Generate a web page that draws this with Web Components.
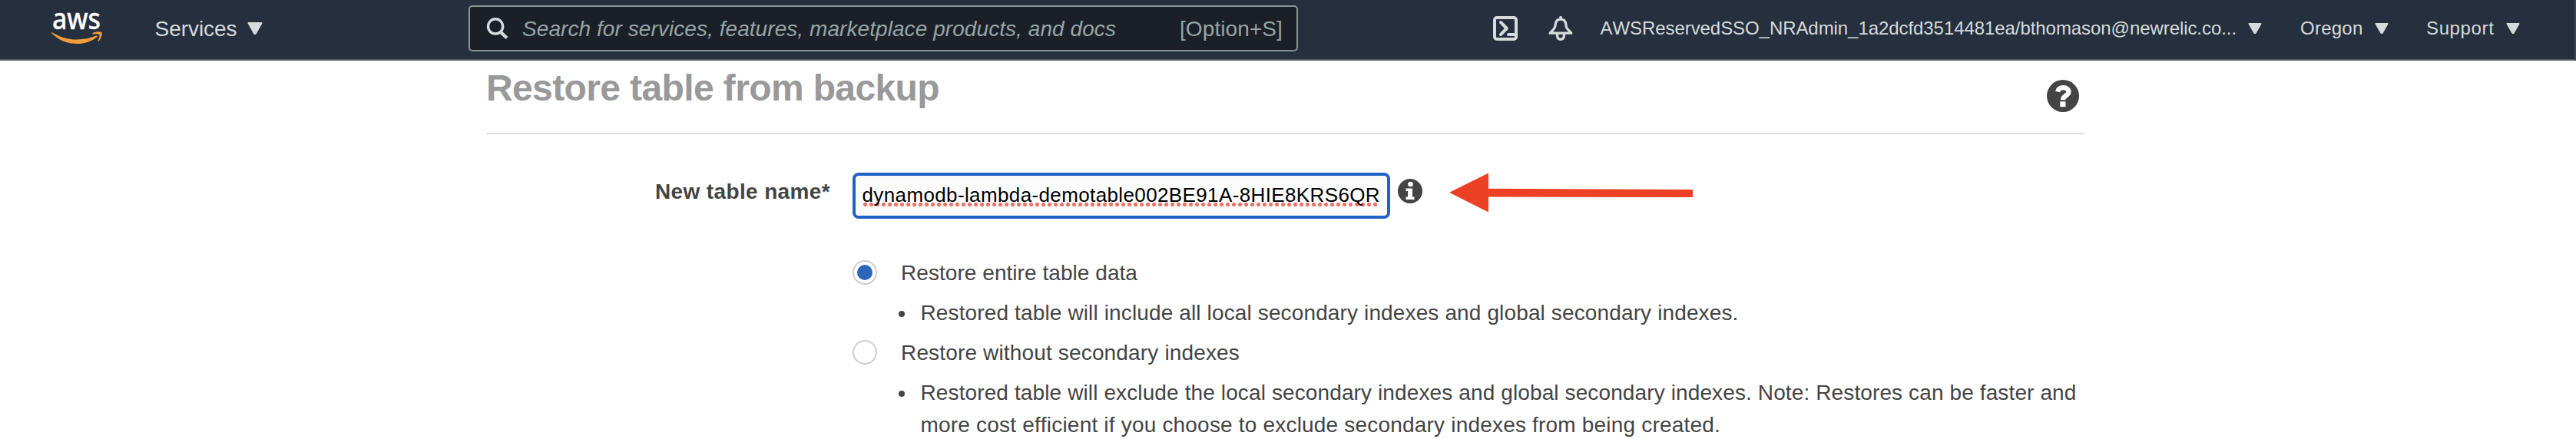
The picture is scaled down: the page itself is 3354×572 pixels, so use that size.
<!DOCTYPE html>
<html lang="en">
<head>
<meta charset="utf-8">
<title>Restore table from backup</title>
<style>
html,body{margin:0;height:572px;overflow:hidden;background:#fff}
body{font-family:"Liberation Sans",Arial,sans-serif;color:#444}
</style>
</head>
<body>
<console-app></console-app>
<script>
const define = (name, html, setup) => customElements.define(name, class extends HTMLElement {
  connectedCallback() {
    if (this.shadowRoot) return;
    const t = document.createElement('template');
    t.innerHTML = html;
    this.attachShadow({mode: 'open'}).append(t.content.cloneNode(true));
    if (setup) setup.call(this, this.shadowRoot);
  }
});

/* One line of text, tracked so that it spans the given width. */
define('text-run', `<style>
:host{display:block;white-space:pre;flex:none}
span{display:inline-block;vertical-align:top;font-kerning:none}
</style><span><slot></slot></span>`, function (root) {
  const w = parseFloat(this.getAttribute('w'));
  this.style.width = w + 'px';
  const s = root.querySelector('span');
  s.style.letterSpacing = (w - s.getBoundingClientRect().width) / this.textContent.length + 'px';
});

define('aws-logo', `<style>:host{display:block;width:68px;height:60px}svg{display:block;overflow:visible}text{font-family:"Noto Sans","Open Sans",sans-serif;font-weight:500}</style>
<svg width="68" height="60" viewBox="0 -16 68 60">
<text x="1.8" y="22.2" font-size="35.5" fill="#fff" stroke="#fff" stroke-width=".3" textLength="59" lengthAdjust="spacingAndGlyphs" transform="translate(0 -1.600) scale(1.07)">aws</text>
<g fill="#f09d3c"><path d="M1.2 27.2C.6 26.8 1.3 25.900 2.200 26.400C12 32.200 22.500 35.500 34.500 35.500C43 35.500 51.500 33.800 59.300 30.600C60.500 30.100 61.600 31.300 60.400 32.200C53.500 37.600 44 41 34.500 41C21.500 41 9.500 36 1.200 27.200Z"/>
<path d="M54.500 27.200C57.800 24.900 64.500 24.700 66.200 26.100C67.900 28 65.500 34.700 62.600 37.700C61.900 38.300 61.300 38 61.600 37.200C62.500 35.200 64.300 30.300 63.300 29.100C62.200 28 57.400 28.400 55 28.600C54 28.700 53.700 27.900 54.500 27.200Z"/></g></svg>`);

define('caret-down', `<style>:host{display:block;flex:none}svg{display:block;width:100%;height:100%}</style>
<svg viewBox="0 0 20 16" preserveAspectRatio="none"><path d="M1.500 1H18.500L11 14.600Q10 15.700 9 14.600Z" fill="#d5dbdb" stroke="#d5dbdb" stroke-width="2" stroke-linejoin="round"/></svg>`);

define('search-box', `<style>
:host{display:flex;box-sizing:border-box;width:1080px;height:60px;margin-top:7px;border:2px solid #879596;border-radius:5px;background:#1a1f28;color:#95a5a6;font-size:28px;line-height:57px}
svg{margin:14px 0 0 21px;flex:none}
.ph{font-style:italic;margin-left:17px}.key{margin-left:83px}
</style>
<svg width="30" height="30" viewBox="0 0 30 30" fill="none" stroke="#d5dbdb"><circle cx="12.100" cy="11.400" r="9.600" stroke-width="3.400"/><path d="M18.500 18.500L27 26.500" stroke-width="4.200"/></svg>
<text-run class="ph" w="773">Search for services, features, marketplace products, and docs</text-run>
<text-run class="key" w="134">[Option+S]</text-run>`);

define('shell-icon', `<style>:host{display:block;width:32px;height:32px}svg{display:block}</style>
<svg width="32" height="32" viewBox="0 0 32 32" fill="none" stroke="#d5dbdb" stroke-width="4"><rect x="2" y="2" width="28" height="28" rx="3"/><path d="M10 8L17.800 16L10 24" stroke-linecap="round" stroke-linejoin="round"/><path d="M20 24H29" stroke-linecap="round"/></svg>`);

define('bell-icon', `<style>:host{display:block;width:32px;height:32px}svg{display:block}</style>
<svg width="32" height="32" viewBox="0 0 32 32" fill="none" stroke="#d5dbdb" stroke-linejoin="round"><path d="M16 1.500V4" stroke-width="3.400" stroke-linecap="round"/><path d="M16 4.200C11 4.200 9.300 7.700 9.100 11.500C8.900 16.800 5 18.500 2.200 22.200H29.800C27 18.500 23.100 16.800 22.900 11.500C22.700 7.700 21 4.200 16 4.200Z" stroke-width="3.300"/><path d="M11.600 23V25.500C11.600 28.500 13.500 30.200 16 30.200S20.400 28.500 20.400 25.500V23" stroke-width="3.400"/></svg>`);

define('console-header', `<style>
:host{display:flex;box-sizing:border-box;height:79px;background:#252f3e;border-bottom:2px solid #545b64;border-right:2px solid #3b4553;color:#d5dbdb;font-size:24px;line-height:73px}
aws-logo{margin:0 0 0 66px}
.services{font-size:28px;line-height:75px;margin-left:67.500px}
caret-down{width:18px;height:14px;margin:30px 0 0 15px}
.big{width:20px;height:16px;margin:29px 0 0 13.500px}
search-box{margin-left:268px}
shell-icon{margin:21px 0 0 254px}bell-icon{margin:21px 0 0 40px}
.acct{margin-left:35.500px}.region{margin-left:50px}.support{margin-left:49.500px}
</style>
<aws-logo></aws-logo>
<text-run class="services" w="107">Services</text-run><caret-down class="big"></caret-down>
<search-box></search-box>
<shell-icon></shell-icon><bell-icon></bell-icon>
<text-run class="acct" w="828.5">AWSReservedSSO_NRAdmin_1a2dcfd3514481ea/bthomason@newrelic.co...</text-run><caret-down></caret-down>
<text-run class="region" w="81.5">Oregon</text-run><caret-down></caret-down>
<text-run class="support" w="88.5">Support</text-run><caret-down></caret-down>`);

define('help-icon', `<style>:host{display:block;flex:none}svg{display:block}</style>
<svg width="42" height="42" viewBox="0 0 42 42"><circle cx="21" cy="21" r="21" fill="#444"/><path d="M14 15.500C14.900 11.900 17.500 10.200 21.200 10.200C25.500 10.200 28.500 12.400 28.500 15.800C28.500 20.600 21 20.200 21 26.300" fill="none" stroke="#fff" stroke-width="6.200"/><rect x="17.300" y="28.300" width="7.200" height="6.900" fill="#fff"/></svg>`);

define('info-icon', `<style>:host{display:block;flex:none}svg{display:block}</style>
<svg width="32" height="32" viewBox="0 0 32 32"><circle cx="16" cy="16" r="16" fill="#444"/><circle cx="16.500" cy="7" r="3.300" fill="#fff"/><path d="M10.500 12.500H19V23.500H21.500V27H10.500V23.500H13V16H10.500Z" fill="#fff"/></svg>`);

define('page-title', `<style>
:host{display:flex;box-sizing:border-box;justify-content:space-between;width:2080px;height:96px;margin-left:634px;padding-top:1px;border-bottom:2px solid #ddd}
text-run{font-size:48px;line-height:69px;font-weight:700;color:#999;margin-left:-1px}
help-icon{margin:24px 7px 0 0}
</style><text-run w="590">Restore table from backup</text-run><help-icon></help-icon>`);

define('name-input', `<style>
:host{display:block;box-sizing:border-box;width:700px;height:60px;border:4px solid #2061c9;border-radius:8px;background:linear-gradient(#f7f7f7,#fcfcfc 8px);color:#000;font-size:26px;line-height:50px;padding-left:8.500px}
div{position:relative;width:674px}
i{position:absolute;left:1px;top:35px;width:672px;height:5px;background:radial-gradient(circle at 2.600px 2.500px,#ef7467 2.300px,transparent 2.900px) 0 0/8px 5px repeat-x}
text-run{position:relative}
</style><div><i></i><text-run w="674.5">dynamodb-lambda-demotable002BE91A-8HIE8KRS6QR</text-run></div>`);

define('name-field', `<style>
:host{display:flex;height:60px;padding:50px 0 0 853px}
.label{font-size:28px;line-height:49px;font-weight:700}
name-input{margin-left:29px}info-icon{margin:8px 0 0 10px}
svg{margin:0 0 0 35px}
</style>
<text-run class="label" w="228">New table name*</text-run><name-input></name-input><info-icon></info-icon>
<svg width="317" height="52" viewBox="0 0 317 52"><path d="M0 25.800L51 .500V20.800L317 22V32L51 31.500V51.500Z" fill="#ec4125"/></svg>`);

define('radio-option', `<style>
:host{display:block;font-size:28px}
.row{display:flex;line-height:33px;height:33px}
b{box-sizing:border-box;width:32px;height:32px;border:2px solid #ccc;border-radius:50%;margin-right:31px;display:grid;place-items:center}
:host([checked]) b::after{content:"";width:20px;height:20px;border-radius:50%;background:#2b66b8}
.detail{margin-top:15px;display:flex}
u{width:8px;height:8px;border-radius:50%;background:#444;margin:18px 20.500px 0 60px;flex:none}
</style><div class="row"><b></b><slot name="label"></slot></div>
<div class="detail"><u></u><div><slot></slot></div></div>`);

define('restore-options', `<style>
:host{display:flex;flex-direction:column;gap:15px;padding:54px 0 0 1110px}
radio-option>text-run:not([slot]){line-height:41px;margin-bottom:1px}
radio-option:first-of-type>text-run:not([slot]){margin-bottom:0}
</style>
<radio-option checked><text-run slot="label" w="308">Restore entire table data</text-run><text-run w="1065">Restored table will include all local secondary indexes and global secondary indexes.</text-run></radio-option>
<radio-option><text-run slot="label" w="441">Restore without secondary indexes</text-run><text-run w="1505">Restored table will exclude the local secondary indexes and global secondary indexes. Note: Restores can be faster and</text-run><text-run w="1041.5">more cost efficient if you choose to exclude secondary indexes from being created.</text-run></radio-option>`);

define('console-app', `<style>:host{display:block;width:3354px;height:572px;overflow:hidden;background:#fff}</style>
<console-header></console-header><page-title></page-title><name-field></name-field><restore-options></restore-options>`);
</script>
</body>
</html>
